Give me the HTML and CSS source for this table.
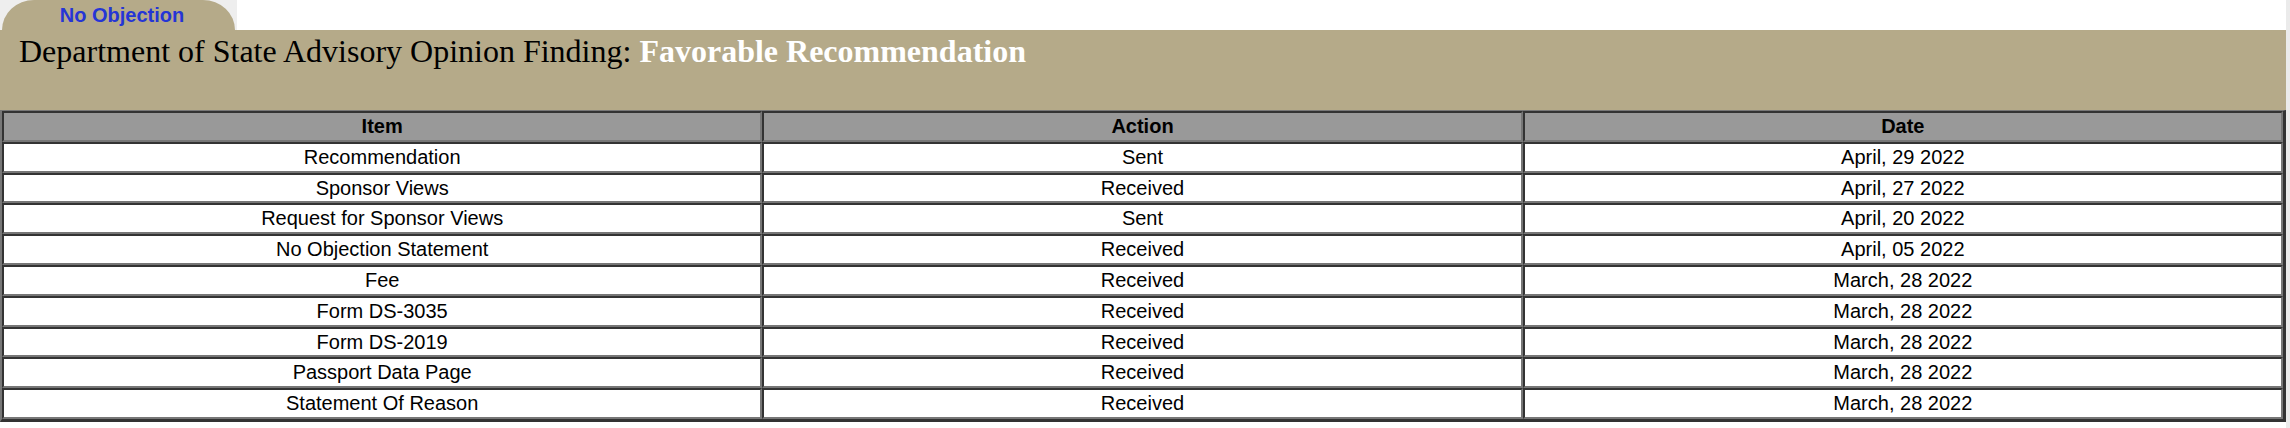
FILE: index.html
```html
<!DOCTYPE html>
<html lang="en">
<head>
<meta charset="utf-8">
<title>Advisory Opinion</title>
<link rel="stylesheet" href="styles.css">
</head>
<body>
<div class="page">
  <div class="main">
    <div class="tabrow">
      <div class="tabbox"><div class="tab">No Objection</div></div>
    </div>
    <div class="band">
      <h1 class="title">Department of State Advisory Opinion Finding: <b class="finding">Favorable Recommendation</b></h1>
    </div>
    <table class="status">
      <thead>
        <tr><th>Item</th><th>Action</th><th>Date</th></tr>
      </thead>
      <tbody>
        <tr><td>Recommendation</td><td>Sent</td><td>April, 29 2022</td></tr>
        <tr><td>Sponsor Views</td><td>Received</td><td>April, 27 2022</td></tr>
        <tr><td>Request for Sponsor Views</td><td>Sent</td><td>April, 20 2022</td></tr>
        <tr><td>No Objection Statement</td><td>Received</td><td>April, 05 2022</td></tr>
        <tr><td>Fee</td><td>Received</td><td>March, 28 2022</td></tr>
        <tr><td>Form DS-3035</td><td>Received</td><td>March, 28 2022</td></tr>
        <tr><td>Form DS-2019</td><td>Received</td><td>March, 28 2022</td></tr>
        <tr><td>Passport Data Page</td><td>Received</td><td>March, 28 2022</td></tr>
        <tr><td>Statement Of Reason</td><td>Received</td><td>March, 28 2022</td></tr>
      </tbody>
    </table>
  </div>
  <div class="rail"></div>
</div>
</body>
</html>
```

FILE: styles.css
```css
html, body {
  margin: 0;
  padding: 0;
  background: #ffffff;
}

.page {
  display: flex;
  min-height: 428px;
}

.main {
  flex: 1;
  min-width: 0;
}

.rail {
  width: 4px;
  background: #ebebeb;
}

.tabrow {
  display: flex;
}

.tabbox {
  width: 235px;
  height: 30px;
  background: #eeeeee;
  padding-left: 2px;
  display: flex;
  align-items: flex-end;
}

.tab {
  width: 233px;
  height: 30px;
  background: #b5aa89;
  border-radius: 32px 32px 0 0 / 30px 30px 0 0;
  text-align: center;
  font-family: "Liberation Sans", Arial, sans-serif;
  font-weight: bold;
  font-size: 20px;
  line-height: 22px;
  padding: 4px 0 0 7px;
  box-sizing: border-box;
  color: #2535d6;
}

.band {
  background: #b5aa89;
  height: 80px;
  padding: 0 19px;
  box-sizing: border-box;
}

.title {
  margin: 0;
  padding-top: 3px;
  font-family: "Liberation Serif", "Times New Roman", serif;
  font-weight: normal;
  font-size: 32px;
  line-height: 36px;
  color: #000000;
}

.finding {
  color: #ffffff;
  font-weight: bold;
}

.status {
  width: 100%;
  border-collapse: separate;
  border-spacing: 0;
  border-style: solid;
  border-width: 1px 3px 3px 2px;
  border-color: #777777 #333333 #333333 #777777;
  table-layout: fixed;
  font-family: "Liberation Sans", Arial, sans-serif;
  font-size: 20px;
  color: #000000;
}

.status th,
.status td {
  border-style: solid;
  border-width: 2px;
  border-color: #333333 #777777 #777777 #333333;
  padding: 2px 4px;
  line-height: 22.8px;
  text-align: center;
  background: #ffffff;
}

.status th {
  background: #999999;
  font-weight: bold;
}
```
